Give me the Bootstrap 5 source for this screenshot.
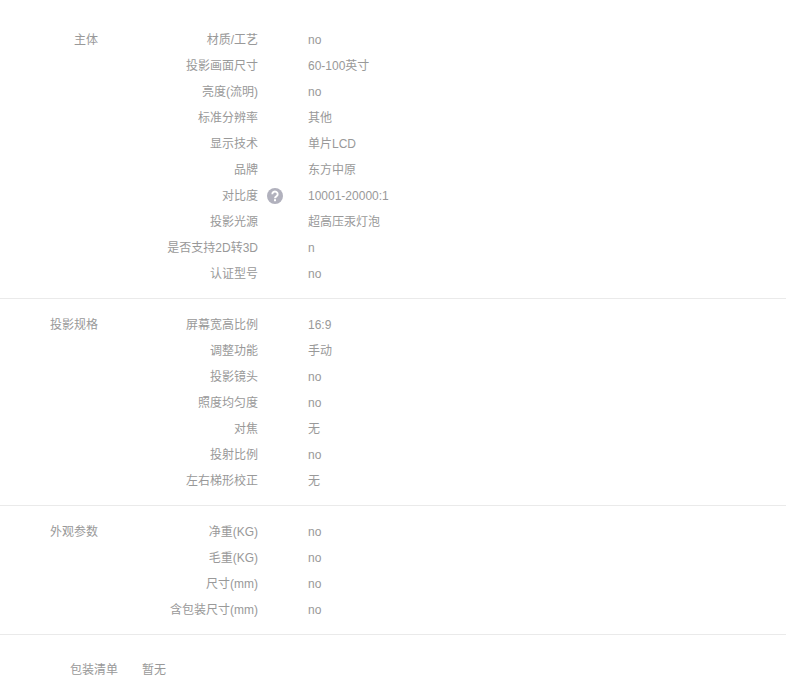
<!DOCTYPE html>
<html lang="zh"><head><meta charset="utf-8">
<link href="https://cdn.jsdelivr.net/npm/bootstrap@5.3.0/dist/css/bootstrap.min.css" rel="stylesheet">
<style>
body{font-family:"Liberation Sans","Noto Sans CJK SC",sans-serif;font-size:12px;color:#999;background:#fff;overflow:hidden}
.spec-group{border-bottom:1px solid #eaeaea;padding:13px 0 11px;display:flex}
.spec-group:first-child{padding-top:27px}
.spec-name{width:98px;text-align:right;line-height:26px;flex:none}
.spec-rows{flex:1}
.spec-row{display:flex;height:26px;line-height:26px}
.spec-key{width:160px;text-align:right;flex:none}
.spec-help{width:50px;flex:none;display:flex;align-items:center;padding-left:9px}
.spec-pack{display:flex;padding-top:22px;line-height:26px}
.pack-key{width:118px;text-align:right}
.pack-val{padding-left:24px}
</style></head><body>
<div class="spec-group"><div class="spec-name">主体</div><div class="spec-rows">
<div class="spec-row"><div class="spec-key">材质/工艺</div><div class="spec-help"></div><div>no</div></div>
<div class="spec-row"><div class="spec-key">投影画面尺寸</div><div class="spec-help"></div><div>60-100英寸</div></div>
<div class="spec-row"><div class="spec-key">亮度(流明)</div><div class="spec-help"></div><div>no</div></div>
<div class="spec-row"><div class="spec-key">标准分辨率</div><div class="spec-help"></div><div>其他</div></div>
<div class="spec-row"><div class="spec-key">显示技术</div><div class="spec-help"></div><div>单片LCD</div></div>
<div class="spec-row"><div class="spec-key">品牌</div><div class="spec-help"></div><div>东方中原</div></div>
<div class="spec-row"><div class="spec-key">对比度</div><div class="spec-help"><svg width="16" height="16" viewBox="0 0 16 16"><circle cx="8" cy="8" r="8" fill="#b1b1bd"/><path d="M5.3 6.2a2.7 2.6 0 1 1 4.2 2.1c-1 .7-1.5 1-1.5 2" fill="none" stroke="#fff" stroke-width="1.9"/><rect x="7" y="11.2" width="2" height="2" fill="#fff"/></svg></div><div>10001-20000:1</div></div>
<div class="spec-row"><div class="spec-key">投影光源</div><div class="spec-help"></div><div>超高压汞灯泡</div></div>
<div class="spec-row"><div class="spec-key">是否支持2D转3D</div><div class="spec-help"></div><div>n</div></div>
<div class="spec-row"><div class="spec-key">认证型号</div><div class="spec-help"></div><div>no</div></div>
</div></div>
<div class="spec-group"><div class="spec-name">投影规格</div><div class="spec-rows">
<div class="spec-row"><div class="spec-key">屏幕宽高比例</div><div class="spec-help"></div><div>16:9</div></div>
<div class="spec-row"><div class="spec-key">调整功能</div><div class="spec-help"></div><div>手动</div></div>
<div class="spec-row"><div class="spec-key">投影镜头</div><div class="spec-help"></div><div>no</div></div>
<div class="spec-row"><div class="spec-key">照度均匀度</div><div class="spec-help"></div><div>no</div></div>
<div class="spec-row"><div class="spec-key">对焦</div><div class="spec-help"></div><div>无</div></div>
<div class="spec-row"><div class="spec-key">投射比例</div><div class="spec-help"></div><div>no</div></div>
<div class="spec-row"><div class="spec-key">左右梯形校正</div><div class="spec-help"></div><div>无</div></div>
</div></div>
<div class="spec-group"><div class="spec-name">外观参数</div><div class="spec-rows">
<div class="spec-row"><div class="spec-key">净重(KG)</div><div class="spec-help"></div><div>no</div></div>
<div class="spec-row"><div class="spec-key">毛重(KG)</div><div class="spec-help"></div><div>no</div></div>
<div class="spec-row"><div class="spec-key">尺寸(mm)</div><div class="spec-help"></div><div>no</div></div>
<div class="spec-row"><div class="spec-key">含包装尺寸(mm)</div><div class="spec-help"></div><div>no</div></div>
</div></div>
<div class="spec-pack"><div class="pack-key">包装清单</div><div class="pack-val">暂无</div></div>
<script src="https://cdn.jsdelivr.net/npm/bootstrap@5.3.0/dist/js/bootstrap.bundle.min.js"></script>
</body></html>
